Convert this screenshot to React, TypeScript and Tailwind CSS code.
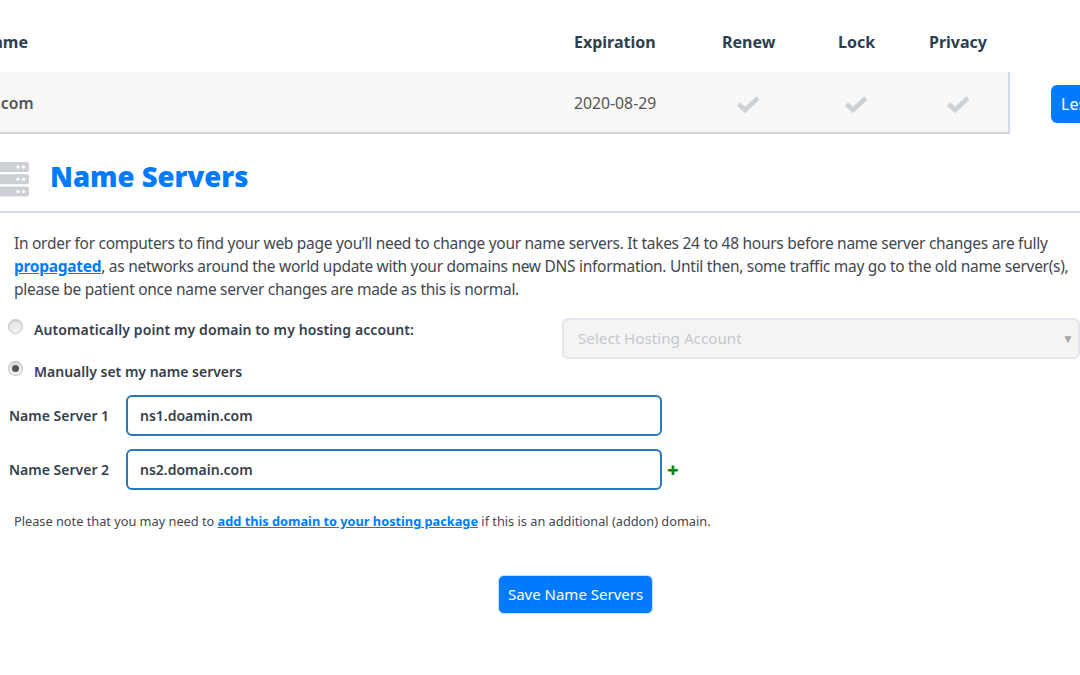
const noto = "font-['Noto_Sans','Open_Sans',sans-serif]";

function Check() {
  return (
    <svg width="24" height="18" viewBox="0 0 24 18" className="mt-[3px] block">
      <path d="M2.5 9 L9 15 L22 3" fill="none" stroke="#ccd1d5" strokeWidth="4.6" />
    </svg>
  );
}

function ServerIcon() {
  return (
    <svg width="42" height="36" viewBox="0 0 42 36" className="block">
      {[0, 12.2, 24.6].map((y) => (
        <g key={y}>
          <rect x="0" y={y} width="41" height="10" rx="2" fill="#ccd0d4" />
          <circle cx="30" cy={y + 5} r="1.7" fill="#fff" />
          <circle cx="35.5" cy={y + 5} r="1.7" fill="#fff" />
        </g>
      ))}
    </svg>
  );
}

function Radio({ checked }: { checked?: boolean }) {
  return (
    <span className="flex h-[15px] w-[15px] items-center justify-center rounded-full border border-[#c4c4c4] bg-gradient-to-b from-[#e2e2e2] to-[#f4f4f4] shadow-[inset_0_1px_1px_rgba(0,0,0,0.1)]">
      {checked && <span className="h-[7px] w-[7px] rounded-full bg-[#555]" />}
    </span>
  );
}

function NameServerRow({ label, value, plus }: { label: string; value: string; plus?: boolean }) {
  return (
    <div className="flex items-center">
      <span className="w-[126px] pl-[9px] text-[14px] font-semibold text-[#34404c]">{label}</span>
      <div className="flex h-[41px] w-[536px] items-center rounded-[6px] border-2 border-[#2a78b5] pl-[12px] text-[14px] font-semibold text-[#34404c]">
        {value}
      </div>
      {plus && <span className="ml-[5px] text-[20px] leading-none font-black text-[#0a8a0a]">+</span>}
    </div>
  );
}

export default function App() {
  return (
    <div className={`${noto} h-[675px] w-[1080px] overflow-hidden bg-white text-[#3f4750]`}>
      {/* Domain table */}
      <div className="-ml-[94px] flex h-[72px] items-center pt-[12px] text-[16px] font-bold text-[#2c3e50]">
        <div className="w-[668px] pl-[8px]">Domain Name</div>
        <div className="w-[148px]">Expiration</div>
        <div className="w-[116px]">Renew</div>
        <div className="w-[91px]">Lock</div>
        <div>Privacy</div>
      </div>
      <div className="flex items-center">
        <div className="-ml-[80px] flex h-[62px] w-[1090px] shrink-0 items-center border-r-2 border-b-2 border-r-[#d3dbe8] border-b-[#d6d6d6] bg-[#f8f8f8] text-[15.75px]">
          <div className="w-[654px] pt-[4px] pl-[18px] font-semibold text-[#555]">domain.com</div>
          <div className="w-[148px] pt-[4px] text-[#555]">2020-08-29</div>
          <div className="w-[108px] pl-[14px]"><Check /></div>
          <div className="w-[102px] pl-[14px]"><Check /></div>
          <div className="pl-[14px]"><Check /></div>
        </div>
        <button className="mt-[2px] ml-[41px] h-[38px] w-[80px] shrink-0 rounded-l-[6px] bg-[#007bff] pl-[10px] text-left text-[16px] whitespace-nowrap text-white">
          Less
        </button>
      </div>

      {/* Heading */}
      <div className="flex h-[79px] items-center border-b-2 border-[#d3dbe8]">
        <div className="-ml-[12px] mt-[14px]"><ServerIcon /></div>
        <h2 className="ml-[20px] mt-[9px] text-[27.5px] font-black text-[#007bff]">Name Servers</h2>
      </div>

      {/* Intro copy */}
      <p className="mt-[19px] ml-[14px] w-[1066px] text-[15.5px] leading-[23px] tracking-[-0.28px] text-[#3f4750]">
        In order for computers to find your web page you’ll need to change your name servers. It takes 24 to 48 hours before name server changes are fully{" "}
        <a className="font-bold text-[#007bff] underline">propagated</a>, as networks around the world update with your domains new DNS information. Until then, some traffic may go to the old name server(s), please be patient once name server changes are made as this is normal.
      </p>

      {/* Options */}
      <div className="mt-[17px] flex">
        <div className="w-[562px] pl-[8px]">
          <label className="-mt-px flex h-[24px] items-center gap-[11px] text-[14px] tracking-[0.1px] font-semibold text-[#34404c]">
            <span className="-mt-[6px]"><Radio /></span>
            Automatically point my domain to my hosting account:
          </label>
          <label className="mt-[18px] flex h-[24px] items-center gap-[11px] text-[14px] font-semibold text-[#34404c]">
            <span className="-mt-[6px]"><Radio checked /></span>
            Manually set my name servers
          </label>
        </div>
        <div className="flex h-[41px] w-[518px] shrink-0 items-center justify-between rounded-[6px] border-2 border-[#e1e5ec] bg-[#f4f4f4] pr-[4px] pl-[14px] text-[15.2px] text-[#c4c8ce]">
          Select Hosting Account
          <span className="text-[12px] text-[#a8a8a8]">▼</span>
        </div>
      </div>

      <div className="mt-[12px] flex flex-col gap-[13px]">
        <NameServerRow label="Name Server 1" value="ns1.doamin.com" />
        <NameServerRow label="Name Server 2" value="ns2.domain.com" plus />
      </div>

      <p className="mt-[22px] ml-[14px] text-[12.75px] text-[#3f4750]">
        Please note that you may need to <a className="font-bold text-[#007bff] underline">add this domain to your hosting package</a> if this is an additional (addon) domain.
      </p>

      <div className="mt-[44px] flex pl-[498px]">
        <button className="h-[39px] w-[155px] rounded-[6px] border border-[#c9dcf3] bg-[#007bff] text-[15px] text-white">
          Save Name Servers
        </button>
      </div>
    </div>
  );
}
